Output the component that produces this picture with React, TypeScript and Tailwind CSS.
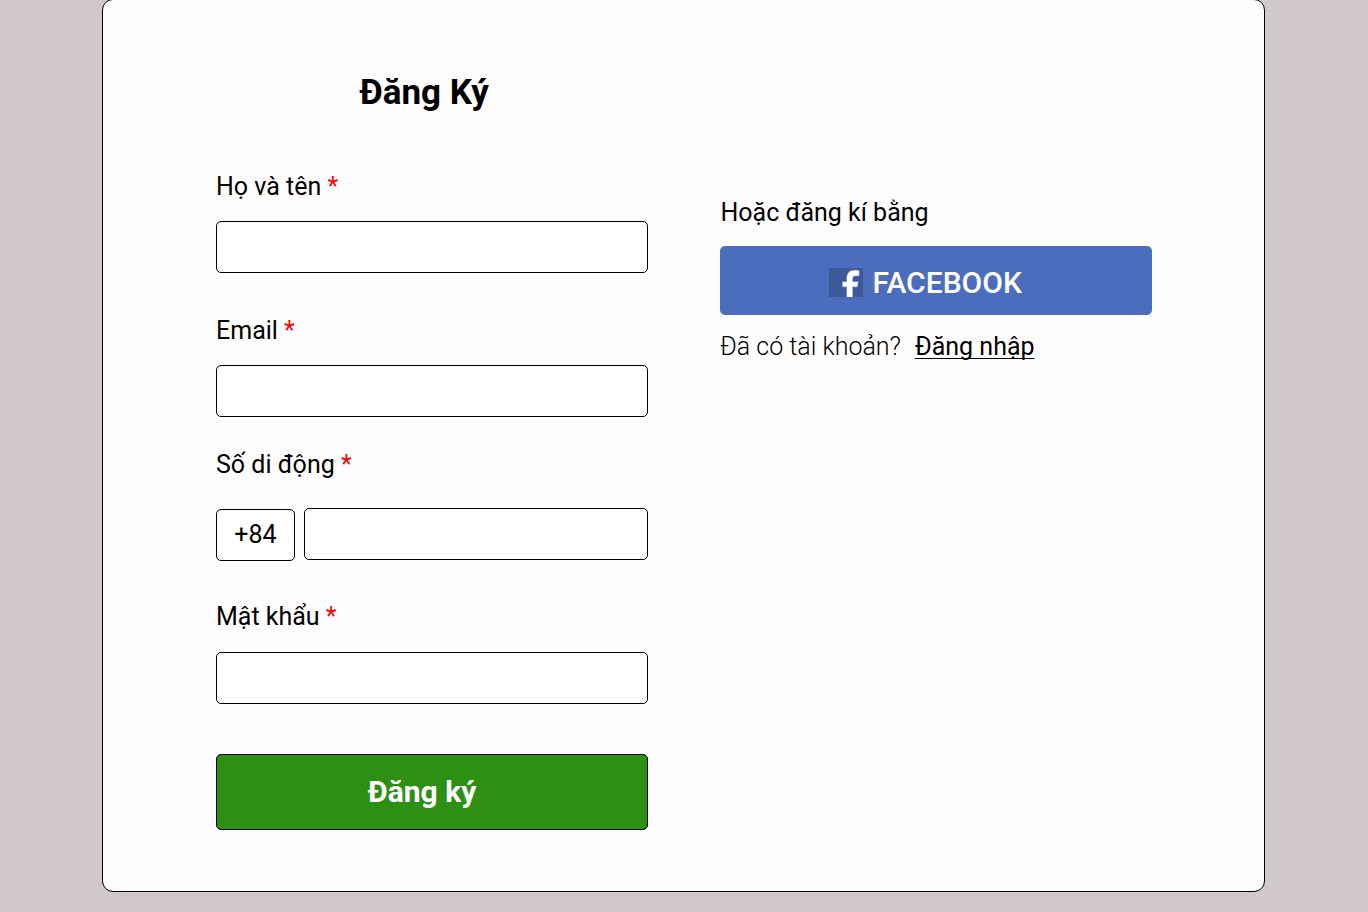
import type { ReactNode } from "react";

const inputClass =
  "block h-[52px] rounded-[5px] border border-black bg-white px-4 text-[25px] outline-none";

function Label({ htmlFor, children }: { htmlFor: string; children: ReactNode }) {
  return (
    <label htmlFor={htmlFor} className="block h-[30px] text-[25px] leading-[30px]">
      {children} <span className="text-[#ff0000]">*</span>
    </label>
  );
}

function FacebookMark() {
  return (
    <svg className="h-[29px] w-[34px] shrink-0" viewBox="0 0 34 29" aria-hidden="true">
      <rect width="34" height="29" fill="#3c5a99" />
      <path
        d="M18 29V18.6h-4.2v-4.7h4.2v-3.2c0-5.2 2.8-8.2 7.5-8.2 2 0 3.6.2 4.3.3v4.8h-2.6c-2.8 0-3.9 1.1-3.9 3.1v3.2h5.5l-.7 4.7h-4.8V29z"
        fill="#fff"
        stroke="#fff"
        strokeOpacity="0.4"
        strokeWidth="1.4"
      />
    </svg>
  );
}

export default function App() {
  return (
    <div className="h-[912px] w-[1368px] overflow-hidden bg-[#d1c9c9] pl-[102px] font-['Roboto',sans-serif] text-black">
      <main className="-mt-px flex h-[893px] w-[1163px] gap-[72px] rounded-[11px] border border-black bg-[#fffdfe] pl-[113px]">
        <form className="flex w-[432px] flex-col pt-[72px]">
          <h1 className="h-[42px] pl-[143.5px] text-[35px] font-bold leading-[42px]">Đăng Ký</h1>

          <div className="mt-[58px]">
            <Label htmlFor="name">Họ và tên</Label>
            <input id="name" className={`${inputClass} mt-[19px] w-full`} />
          </div>

          <div className="mt-[43px]">
            <Label htmlFor="email">Email</Label>
            <input id="email" className={`${inputClass} mt-[19px] w-full`} />
          </div>

          <div className="mt-[33px]">
            <Label htmlFor="phone">Số di động</Label>
            <div className="mt-[28px] flex h-[53px] gap-[9px]">
              <span className="mt-px flex h-[52px] w-[79px] items-center justify-center rounded-[5px] border border-black bg-white text-[25px]">
                +84
              </span>
              <input id="phone" className={`${inputClass} w-[344px]`} />
            </div>
          </div>

          <div className="mt-[41px]">
            <Label htmlFor="password">Mật khẩu</Label>
            <input id="password" type="password" className={`${inputClass} mt-[20px] w-full`} />
          </div>

          <button
            type="button"
            className="mt-[50px] h-[76px] w-full rounded-[5px] border border-black bg-[#2e8f15] pr-[20px] text-[30px] font-bold leading-[36px] text-white"
          >
            Đăng ký
          </button>
        </form>

        <section className="w-[432px] pt-[198px]">
          <p className="h-[30px] pl-[0.5px] text-[25px] leading-[30px]">Hoặc đăng kí bằng</p>
          <button
            type="button"
            className="mt-[18px] flex h-[69px] w-full items-center rounded-[5px] bg-[#4c6dbe] pl-[109px] pt-[4px] text-white"
          >
            <FacebookMark />
            <span className="ml-[9.5px] text-[30px] font-medium leading-[36px]">FACEBOOK</span>
          </button>
          <p className="mt-[17px] flex h-[30px] gap-[14px] text-[25px] leading-[30px]">
            <span className="font-light">Đã có tài khoản?</span>
            <a
              href="#"
              className="underline decoration-1 underline-offset-[3px] [text-decoration-skip-ink:none]"
            >
              Đăng nhập
            </a>
          </p>
        </section>
      </main>
    </div>
  );
}
